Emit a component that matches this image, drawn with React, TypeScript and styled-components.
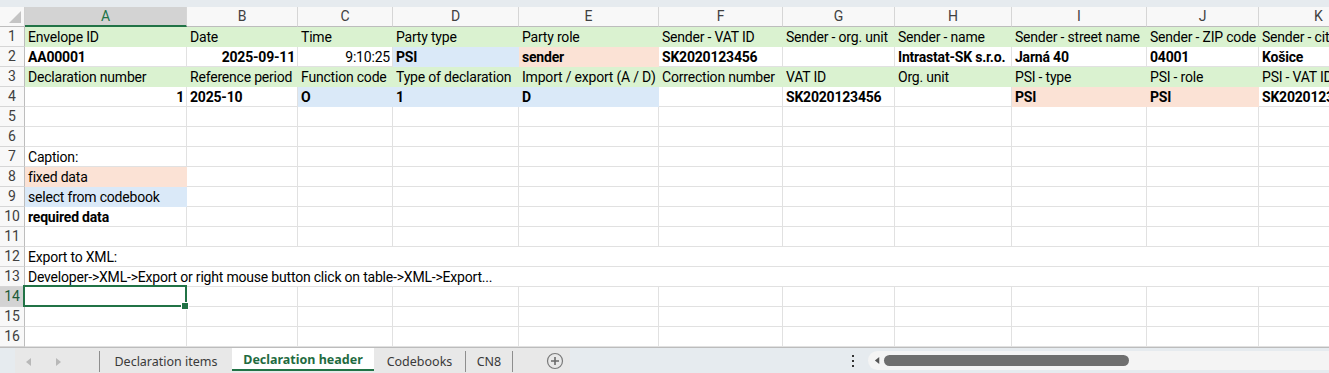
import React from "react";
import styled, { createGlobalStyle, css } from "styled-components";

const GlobalStyle = createGlobalStyle`
  html, body {
    margin: 0;
    padding: 0;
    background: #ffffff;
    overflow: hidden;
  }
  body {
    font-family: Roboto, "Liberation Sans", Arial, sans-serif;
  }
`;

type Fill = "green" | "orange" | "blue";

type CellData = {
  text?: string;
  bold?: boolean;
  right?: boolean;
  fill?: Fill;
};

const FILLS: Record<Fill, string> = {
  green: "#daf2d0",
  orange: "#fbe2d5",
  blue: "#dae9f8",
};

const COLS = [162, 111, 95, 126, 140, 124, 112, 117, 135, 112, 120];
const LETTERS = ["A", "B", "C", "D", "E", "F", "G", "H", "I", "J", "K"];
const GREEN = "#217346";

const green = (text: string): CellData => ({ text, fill: "green" });
const b = (text: string, extra: Partial<CellData> = {}): CellData => ({
  text,
  bold: true,
  ...extra,
});

const ROWS: CellData[][] = [
  [
    "Envelope ID",
    "Date",
    "Time",
    "Party type",
    "Party role",
    "Sender - VAT ID",
    "Sender - org. unit",
    "Sender - name",
    "Sender - street name",
    "Sender - ZIP code",
    "Sender - city",
  ].map(green),
  [
    b("AA00001"),
    b("2025-09-11", { right: true }),
    { text: "9:10:25", right: true },
    b("PSI", { fill: "blue" }),
    b("sender", { fill: "orange" }),
    b("SK2020123456"),
    {},
    b("Intrastat-SK s.r.o."),
    b("Jarná 40"),
    b("04001"),
    b("Košice"),
  ],
  [
    "Declaration number",
    "Reference period",
    "Function code",
    "Type of declaration",
    "Import / export (A / D)",
    "Correction number",
    "VAT ID",
    "Org. unit",
    "PSI - type",
    "PSI - role",
    "PSI - VAT ID",
  ].map(green),
  [
    b("1", { right: true }),
    b("2025-10"),
    b("O", { fill: "blue" }),
    b("1", { fill: "blue" }),
    b("D", { fill: "blue" }),
    {},
    b("SK2020123456"),
    {},
    b("PSI", { fill: "orange" }),
    b("PSI", { fill: "orange" }),
    b("SK2020123456"),
  ],
  [],
  [],
  [{ text: "Caption:" }],
  [{ text: "fixed data", fill: "orange" }],
  [{ text: "select from codebook", fill: "blue" }],
  [b("required data")],
  [],
];

// rows whose single text runs across the whole sheet width
const WIDE_ROWS: Record<number, string> = {
  12: "Export to XML:",
  13: "Developer->XML->Export or right mouse button click on table->XML->Export...",
};

const SELECTED_ROW = 14;
const ROW_COUNT = 16;

const Window = styled.div`
  width: 1329px;
  height: 373px;
  display: flex;
  flex-direction: column;
  overflow: hidden;
  background: #e6ebef;
`;

const TopBand = styled.div`
  height: 7px;
  flex: none;
  background: #e6ebef;
`;

const Sheet = styled.div`
  display: grid;
  grid-template-columns: 25px ${COLS.map((w) => `${w}px`).join(" ")};
  grid-auto-rows: 20px;
  background: #ffffff;
  overflow: hidden;
  flex: none;
  height: 340px;
`;

const Corner = styled.div`
  box-sizing: border-box;
  background: #f8f8f8;
  border-right: 1px solid #d0d0d0;
  border-bottom: 1px solid #bdbdbd;
  display: flex;
  align-items: flex-end;
  justify-content: flex-end;
  padding: 0 3px 3px 0;
`;

const ColHeader = styled.div<{ $active?: boolean }>`
  box-sizing: border-box;
  background: #f8f8f8;
  border-right: 1px solid #d6d6d6;
  border-bottom: 1px solid #bdbdbd;
  color: #404040;
  font-size: 14px;
  line-height: 19px;
  text-align: center;
  ${(p) =>
    p.$active &&
    css`
      background: #d3d3d3;
      color: ${GREEN};
      border-bottom: 2px solid ${GREEN};
      line-height: 18px;
    `}
`;

const RowHeader = styled.div<{ $active?: boolean }>`
  box-sizing: border-box;
  background: #f8f8f8;
  border-right: 1px solid #bdbdbd;
  border-bottom: 1px solid #d6d6d6;
  color: #404040;
  font-size: 14px;
  line-height: 19px;
  text-align: center;
  ${(p) =>
    p.$active &&
    css`
      background: #d3d3d3;
      color: #1d5a38;
    `}
`;

const Cell = styled.div<{ $fill?: Fill; $bold?: boolean; $right?: boolean; $wide?: boolean }>`
  position: relative;
  box-sizing: border-box;
  min-width: 0;
  padding: 0 2px 0 3px;
  border-right: 1px solid #e1e1e1;
  border-bottom: 1px solid #e1e1e1;
  background: #ffffff;
  color: #000000;
  font-size: 14px;
  letter-spacing: -0.2px;
  line-height: 20px;
  white-space: nowrap;
  overflow: hidden;
  font-weight: ${(p) => (p.$bold ? 700 : 400)};
  text-align: ${(p) => (p.$right ? "right" : "left")};
  ${(p) =>
    p.$fill &&
    css`
      background: ${FILLS[p.$fill]};
      border-color: ${FILLS[p.$fill]};
    `}
  ${(p) =>
    p.$wide &&
    css`
      grid-column: 2 / -1;
      border-right: none;
    `}
`;

const SelectedCell = styled(Cell)`
  overflow: visible;
  z-index: 2;
`;

const Selection = styled.div`
  position: absolute;
  top: -2px;
  left: -2px;
  right: -1px;
  bottom: -1px;
  border: 2px solid ${GREEN};
  pointer-events: none;

  &::after {
    content: "";
    position: absolute;
    right: -4px;
    bottom: -5px;
    width: 6px;
    height: 6px;
    background: ${GREEN};
    border: 1px solid #ffffff;
  }
`;

/* bottom bar */

const TabBar = styled.div`
  flex: none;
  height: 26px;
  display: flex;
  align-items: stretch;
  border-top: 1px solid #bcbcbc;
  box-sizing: border-box;
  background: #e6ebef;
  font-family: "Noto Sans", "Open Sans", sans-serif;
  font-size: 12.5px;
`;

const TabStrip = styled.div`
  display: flex;
  align-items: stretch;
  background: #e8e8e8;
  margin-left: 15px;
  width: 555px;
`;

const Nav = styled.div`
  width: 85px;
  display: flex;
  align-items: center;
  padding-left: 10px;
  gap: 21px;
  color: #b3b3b3;
  border-right: 1px solid #8e8e8e;
  margin: 3px 0 1px;
  box-sizing: border-box;
`;

const Tab = styled.div<{ $active?: boolean; $sep?: boolean; $w: number }>`
  width: ${(p) => p.$w}px;
  box-sizing: border-box;
  display: flex;
  align-items: center;
  justify-content: center;
  color: #3a3a3a;
  padding-top: 1px;
  ${(p) =>
    p.$sep &&
    css`
      border-right: 1px solid #8e8e8e;
      margin: 3px 0 1px;
      padding-top: 0;
    `}
  ${(p) =>
    p.$active &&
    css`
      background: #ffffff;
      color: #1f6b41;
      font-weight: 700;
      border-bottom: 2px solid ${GREEN};
      margin-bottom: 2px;
    `}
`;

const AddButton = styled.div`
  margin-left: 27px;
  width: 30px;
  display: flex;
  align-items: center;
  justify-content: center;
`;

const Spacer = styled.div`
  flex: 1;
`;

const Dots = styled.div`
  width: 30px;
  display: flex;
  align-items: center;
  justify-content: center;
`;

const ScrollTrack = styled.div`
  width: 461px;
  box-sizing: border-box;
  margin: 3px 0 3px;
  background: #f4f4f4;
  border-radius: 10px 0 0 10px;
  display: flex;
  align-items: center;
  padding-left: 6px;
  gap: 3px;
`;

const Thumb = styled.div`
  width: 245px;
  height: 11px;
  border-radius: 6px;
  background: #6e6e6e;
`;

function Arrow({ dir, color, size = 8 }: { dir: "left" | "right"; color: string; size?: number }) {
  const d = dir === "left" ? "M6 0 L6 8 L1 4 Z" : "M2 0 L2 8 L7 4 Z";
  return (
    <svg width={size} height={size} viewBox="0 0 8 8">
      <path d={d} fill={color} />
    </svg>
  );
}

function SheetTabs() {
  return (
    <TabBar>
      <TabStrip>
        <Nav>
          <Arrow dir="left" color="#b8b8b8" />
          <Arrow dir="right" color="#b8b8b8" />
        </Nav>
        <Tab $w={132}>Declaration items</Tab>
        <Tab $w={142} $active>
          Declaration header
        </Tab>
        <Tab $w={92} $sep>
          Codebooks
        </Tab>
        <Tab $w={47} $sep>
          CN8
        </Tab>
        <AddButton>
          <svg width="18" height="18" viewBox="0 0 18 18">
            <circle cx="9" cy="9" r="7.5" fill="none" stroke="#7a7a7a" strokeWidth="1.2" />
            <path d="M9 5 V13 M5 9 H13" stroke="#6a6a6a" strokeWidth="1.6" />
          </svg>
        </AddButton>
      </TabStrip>
      <Spacer />
      <Dots>
        <svg width="4" height="14" viewBox="0 0 4 14">
          <rect x="1" y="1" width="2" height="2" fill="#333" />
          <rect x="1" y="6" width="2" height="2" fill="#333" />
          <rect x="1" y="11" width="2" height="2" fill="#333" />
        </svg>
      </Dots>
      <ScrollTrack>
        <Arrow dir="left" color="#555" size={7} />
        <Thumb />
      </ScrollTrack>
    </TabBar>
  );
}

function Grid() {
  const rows: React.ReactNode[] = [];
  for (let r = 1; r <= ROW_COUNT; r++) {
    const active = r === SELECTED_ROW;
    rows.push(
      <RowHeader key={`h${r}`} $active={active}>
        {r}
      </RowHeader>
    );
    if (WIDE_ROWS[r]) {
      rows.push(
        <Cell key={`w${r}`} $wide>
          {WIDE_ROWS[r]}
        </Cell>
      );
      continue;
    }
    const data = ROWS[r - 1] || [];
    COLS.forEach((_, c) => {
      const cell = data[c] || {};
      if (active && c === 0) {
        rows.push(
          <SelectedCell key={`${r}-${c}`}>
            <Selection />
          </SelectedCell>
        );
        return;
      }
      rows.push(
        <Cell key={`${r}-${c}`} $fill={cell.fill} $bold={cell.bold} $right={cell.right}>
          {cell.text}
        </Cell>
      );
    });
  }

  return (
    <Sheet>
      <Corner>
        <svg width="12" height="12" viewBox="0 0 12 12">
          <path d="M12 0 L12 12 L0 12 Z" fill="#c4c4c4" />
        </svg>
      </Corner>
      {LETTERS.map((l, i) => (
        <ColHeader key={l} $active={i === 0}>
          {l}
        </ColHeader>
      ))}
      {rows}
    </Sheet>
  );
}

export default function App() {
  return (
    <>
      <GlobalStyle />
      <Window>
        <TopBand />
        <Grid />
        <SheetTabs />
      </Window>
    </>
  );
}
